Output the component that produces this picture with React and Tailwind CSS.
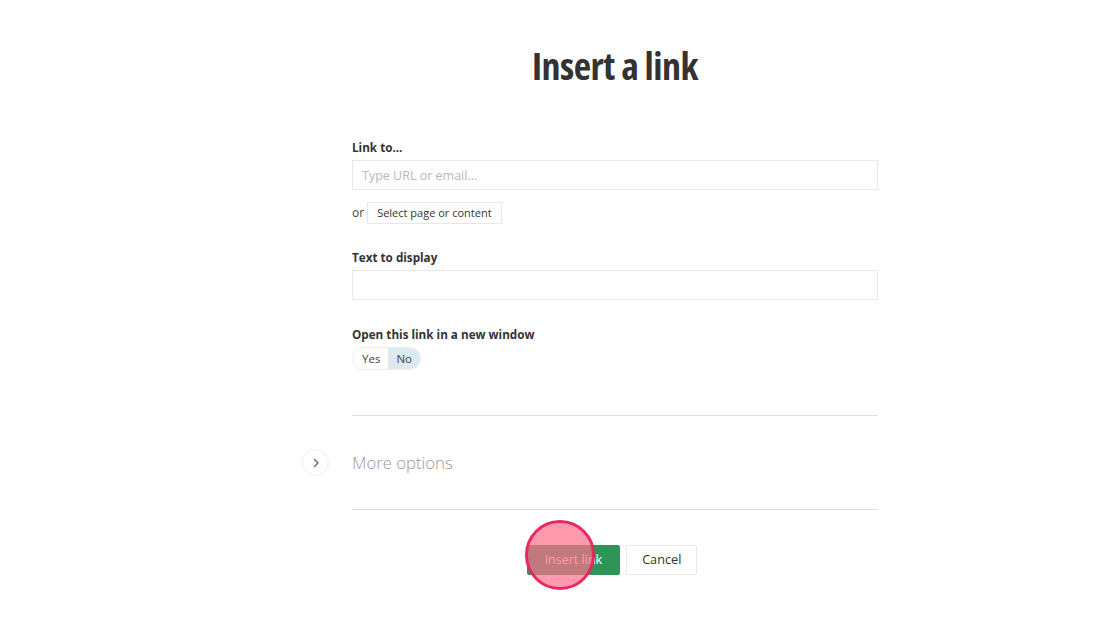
import { useState } from 'react';

const font = { fontFamily: '"Open Sans", "Noto Sans", sans-serif' };

export default function App() {
  const [newWindow, setNewWindow] = useState(false);

  return (
    <div className="min-h-[625px] w-full bg-white text-[#333]" style={font}>
      <div className="mx-auto w-[526px] pt-[40px] relative left-[55px]">
        <h1 className="text-center text-[38px] font-bold leading-[50px] tracking-[-0.5px] text-[#333] [font-stretch:75%]">
          Insert a link
        </h1>

        <div className="mt-[48px]">
          <label className="block text-[11.7px] font-bold leading-[18px]">Link to...</label>
          <input
            className="mt-[4px] block h-[30px] w-full border border-[#e8e8e8] px-[9px] text-[12.5px] outline-none placeholder:text-[#b8b8b8]"
            placeholder="Type URL or email..."
          />
          <div className="mt-[12px] flex items-center gap-[3px]">
            <span className="text-[12px] text-[#444]">or</span>
            <button className="h-[22px] border border-[#e8e8e8] px-[9px] text-[11px] text-[#333]">
              Select page or content
            </button>
          </div>
        </div>

        <div className="mt-[24px]">
          <label className="block text-[11.7px] font-bold leading-[18px]">Text to display</label>
          <input className="mt-[4px] block h-[30px] w-full border border-[#e8e8e8] px-[9px] text-[12.5px] outline-none" />
        </div>

        <div className="mt-[25px]">
          <label className="block text-[11.7px] font-bold leading-[18px]">Open this link in a new window</label>
          <div className="mt-[4px] inline-flex h-[23px] overflow-hidden rounded-full border border-[#ececec] text-[11.5px]">
            <button
              onClick={() => setNewWindow(true)}
              className={`pl-[9px] pr-[8px] ${newWindow ? 'bg-[#dde9f0]' : 'bg-white'} text-[#444]`}
            >
              Yes
            </button>
            <button
              onClick={() => setNewWindow(false)}
              className={`pl-[8px] pr-[8px] ${!newWindow ? 'bg-[#dde9f0]' : 'bg-white'} text-[#444]`}
            >
              No
            </button>
          </div>
        </div>

        <div className="mt-[45px] border-t border-[#dedede]" />

        <div className="relative flex h-[93px] items-center">
          <button className="absolute left-[-50px] top-[33px] flex h-[27px] w-[27px] items-center justify-center rounded-full border border-[#eeeeee]">
            <svg width="10" height="10" viewBox="0 0 10 10" fill="none">
              <path d="M3.5 1.5L7 5L3.5 8.5" stroke="#666" strokeWidth="1.4" strokeLinecap="round" strokeLinejoin="round" />
            </svg>
          </button>
          <span className="text-[16.7px] font-light text-[#999999]">More options</span>
        </div>

        <div className="border-t border-[#dedede]" />

        <div className="mt-[35px] flex justify-center gap-[6px] pr-[6px]">
          <div className="relative">
            <button className="h-[30px] rounded-[2px] bg-[#2e9558] px-[18px] text-[12.5px] text-white">Insert link</button>
            <div className="pointer-events-none absolute left-[-2px] top-[-25px] h-[70px] w-[70px] rounded-full border-[3px] border-[#e82860] bg-[rgba(255,110,140,0.7)]" />
          </div>
          <button className="h-[30px] rounded-[2px] border border-[#e8e8e8] bg-white px-[15px] text-[12.7px] text-[#333]">
            Cancel
          </button>
        </div>
      </div>
    </div>
  );
}
